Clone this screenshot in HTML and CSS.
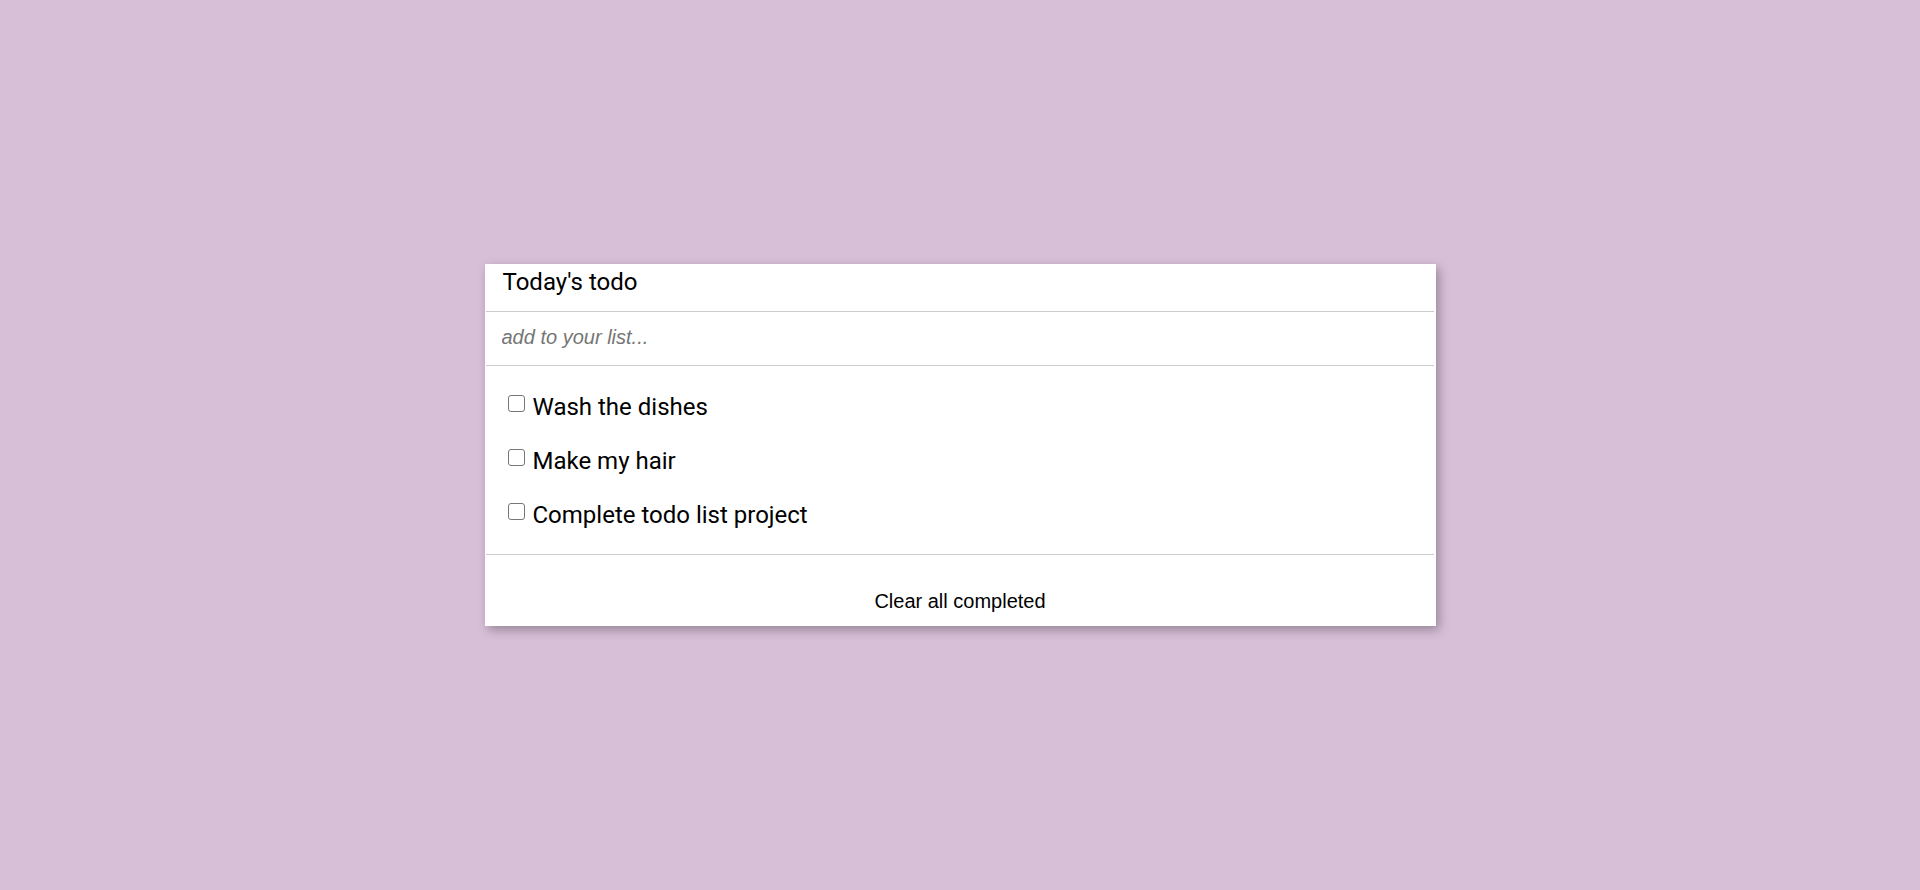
FILE: index.html
```html
<!DOCTYPE html>
<html lang="en">
<head>
<meta charset="utf-8">
<title>Today's todo</title>
<link rel="stylesheet" href="styles.css">
</head>
<body>
<main class="card">
  <header class="card-header">Today's todo</header>
  <div class="add-row">
    <input class="add-input" type="text" placeholder="add to your list...">
  </div>
  <ul class="todo-list">
    <li class="todo-item"><input class="todo-check" type="checkbox"><span class="todo-text">Wash the dishes</span></li>
    <li class="todo-item"><input class="todo-check" type="checkbox"><span class="todo-text">Make my hair</span></li>
    <li class="todo-item"><input class="todo-check" type="checkbox"><span class="todo-text">Complete todo list project</span></li>
  </ul>
  <footer class="card-footer">
    <button class="clear-btn" type="button">Clear all completed</button>
  </footer>
</main>
</body>
</html>
```

FILE: styles.css
```css
* {
  box-sizing: border-box;
}

html, body {
  margin: 0;
  padding: 0;
}

body {
  min-height: 100vh;
  background: #d8bfd8;
  display: flex;
  align-items: center;
  justify-content: center;
  font-family: "Liberation Sans", Arial, sans-serif;
}

.card {
  width: 951px;
  height: 362px;
  background: #ffffff;
  box-shadow: 3px 4px 10px rgba(0, 0, 0, 0.3);
  display: flex;
  flex-direction: column;
}

.card-header {
  height: 48px;
  margin: 0 2px 0 1px;
  padding: 4px 17px 0;
  border-bottom: 1px solid #cccccc;
  font-family: Roboto, "Liberation Sans", sans-serif;
  font-size: 24px;
  line-height: normal;
  color: #000000;
}

.add-row {
  height: 54px;
  margin: 0 2px 0 1px;
  border-bottom: 1px solid #cccccc;
}

.add-input {
  display: block;
  width: 100%;
  height: 53px;
  margin: 0;
  padding: 0 16px 2px;
  border: none;
  outline: none;
  background: transparent;
  font-family: "Liberation Sans", Arial, sans-serif;
  font-size: 20px;
  font-style: italic;
  color: #000000;
}

.add-input::placeholder {
  color: #757575;
  font-style: italic;
}

.todo-list {
  list-style: none;
  margin: 0 2px 0 1px;
  padding: 14px 0 12px;
  height: 189px;
  border-bottom: 1px solid #cccccc;
}

.todo-item {
  padding: 13px 0 13px 22px;
  font-family: Roboto, "Liberation Sans", sans-serif;
  font-size: 24px;
  line-height: normal;
  color: #000000;
  white-space: nowrap;
}

.todo-check {
  appearance: none;
  -webkit-appearance: none;
  width: 17px;
  height: 17px;
  margin: 0 8px 3px 0;
  border: 1px solid #767676;
  border-radius: 3px;
  background: #ffffff;
  vertical-align: baseline;
}

.card-footer {
  flex: 1;
  display: flex;
  justify-content: center;
  padding-top: 35px;
}

.clear-btn {
  margin: 0;
  padding: 0;
  height: 23px;
  border: none;
  background: transparent;
  font-family: "Liberation Sans", Arial, sans-serif;
  font-size: 20px;
  line-height: normal;
  color: #000000;
  cursor: pointer;
}
```
